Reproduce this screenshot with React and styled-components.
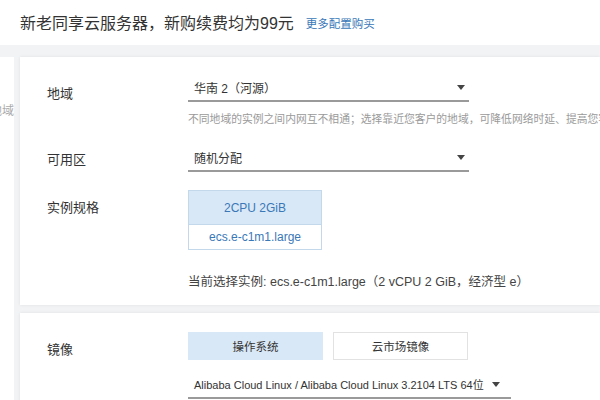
import React from 'react';
import styled, { createGlobalStyle } from 'styled-components';

const GlobalStyle = createGlobalStyle`
  html, body {
    margin: 0;
    padding: 0;
    width: 600px;
    height: 400px;
    overflow: hidden;
    background: #f2f3f5;
    font-family: "Liberation Sans", "Noto Sans CJK SC", sans-serif;
    color: #333;
  }
`;

const Page = styled.div`
  width: 600px;
  height: 400px;
  display: flex;
  flex-direction: column;
  overflow: hidden;
`;

const Header = styled.div`
  height: 45px;
  flex-shrink: 0;
  background: #fff;
  display: flex;
  align-items: center;
  gap: 12px;
  padding: 0 0 2px 20px;
  box-sizing: border-box;
`;

const Title = styled.h1`
  margin: 0;
  font-size: 16px;
  font-weight: normal;
  color: #333;
  white-space: nowrap;
`;

const MoreLink = styled.a`
  font-size: 11.5px;
  color: #3a78b8;
  text-decoration: none;
  margin-top: 2px;
`;

const Body = styled.div`
  flex: 1;
  display: flex;
  gap: 6px;
  padding-top: 12px;
  min-height: 0;
`;

const SidePanel = styled.div`
  width: 14px;
  flex-shrink: 0;
  background: #fff;
  overflow: hidden;
  display: flex;
  justify-content: flex-end;
  padding-top: 44px;
  box-sizing: border-box;
  font-size: 12px;
  color: #aaa;
  white-space: nowrap;
`;

const Main = styled.div`
  flex: 1;
  display: flex;
  flex-direction: column;
  gap: 8px;
  min-width: 0;
`;

const Card = styled.section`
  background: #fff;
  box-shadow: 0 0 3px rgba(0, 0, 0, 0.08);
  padding: ${(p) => p.$pad};
  height: ${(p) => p.$height || 'auto'};
  box-sizing: border-box;
  flex-shrink: 0;
  overflow: hidden;
`;

const Row = styled.div`
  display: grid;
  grid-template-columns: 141px 1fr;
  margin-top: ${(p) => p.$gap || 0}px;
`;

const Label = styled.div`
  font-size: 13px;
  color: #333;
  padding-top: ${(p) => p.$top || 0}px;
  line-height: 18px;
`;

const Field = styled.div`
  display: flex;
  flex-direction: column;
  min-width: 0;
`;

const Select = styled.div`
  width: ${(p) => p.$width}px;
  height: 24px;
  box-sizing: border-box;
  border-bottom: 2px solid #9a9a9a;
  display: flex;
  align-items: center;
  justify-content: space-between;
  gap: 8px;
  padding: 0 4px 4px 6px;
  font-size: 12px;
  color: #333;
  white-space: nowrap;
`;

const Caret = styled.span`
  flex-shrink: 0;
  width: 0;
  height: 0;
  border-left: 4px solid transparent;
  border-right: 4px solid transparent;
  border-top: 5px solid #444;
`;

const Help = styled.div`
  margin-top: 10px;
  font-size: 10.8px;
  color: #9a9a9a;
  white-space: nowrap;
  line-height: 14px;
`;

const SpecCard = styled.div`
  width: 134px;
  border: 1px solid #c4d8ec;
  box-sizing: border-box;
  color: #3a78b8;
  font-size: 12px;
`;

const SpecHead = styled.div`
  height: 33px;
  background: #d9e8f6;
  border-bottom: 1px solid #c4d8ec;
  display: flex;
  align-items: center;
  justify-content: center;
`;

const SpecBody = styled.div`
  height: 24px;
  display: flex;
  align-items: center;
  justify-content: center;
`;

const Current = styled.div`
  margin-top: 21px;
  font-size: 12.5px;
  color: #444;
  white-space: nowrap;
`;

const Tabs = styled.div`
  display: flex;
  gap: 10px;
`;

const Tab = styled.div`
  width: 135px;
  height: 28px;
  box-sizing: border-box;
  display: flex;
  align-items: center;
  justify-content: center;
  font-size: 11.5px;
  color: #333;
  background: ${(p) => (p.$active ? '#d9e8f6' : '#fff')};
  border: 1px solid ${(p) => (p.$active ? '#d9e8f6' : '#e2e2e2')};
`;

const ImageSelect = styled(Select)`
  margin-top: 15px;
  padding-right: 14px;
  font-size: 11px;
`;

export default function App() {
  return (
    <Page>
      <GlobalStyle />
      <Header>
        <Title>新老同享云服务器，新购续费均为99元</Title>
        <MoreLink href="#">更多配置购买</MoreLink>
      </Header>
      <Body>
        <SidePanel>地域</SidePanel>
        <Main>
          <Card $pad="21px 0 0 27px" $height="248px">
            <Row>
              <Label $top={7}>地域</Label>
              <Field>
                <Select $width={281}>
                  <span>华南 2（河源）</span>
                  <Caret />
                </Select>
                <Help>
                  不同地域的实例之间内网互不相通；选择靠近您客户的地域，可降低网络时延、提高您客户的访问速度
                </Help>
              </Field>
            </Row>
            <Row $gap={22}>
              <Label $top={3}>可用区</Label>
              <Field>
                <Select $width={281}>
                  <span>随机分配</span>
                  <Caret />
                </Select>
              </Field>
            </Row>
            <Row $gap={18}>
              <Label $top={9}>实例规格</Label>
              <Field>
                <SpecCard>
                  <SpecHead>2CPU 2GiB</SpecHead>
                  <SpecBody>ecs.e-c1m1.large</SpecBody>
                </SpecCard>
                <Current>当前选择实例: ecs.e-c1m1.large（2 vCPU 2 GiB，经济型 e）</Current>
              </Field>
            </Row>
          </Card>
          <Card $pad="19px 0 0 27px" $height="120px">
            <Row>
              <Label $top={9}>镜像</Label>
              <Field>
                <Tabs>
                  <Tab $active>操作系统</Tab>
                  <Tab>云市场镜像</Tab>
                </Tabs>
                <ImageSelect $width={323}>
                  <span>Alibaba Cloud Linux / Alibaba Cloud Linux 3.2104 LTS 64位</span>
                  <Caret />
                </ImageSelect>
              </Field>
            </Row>
          </Card>
        </Main>
      </Body>
    </Page>
  );
}
